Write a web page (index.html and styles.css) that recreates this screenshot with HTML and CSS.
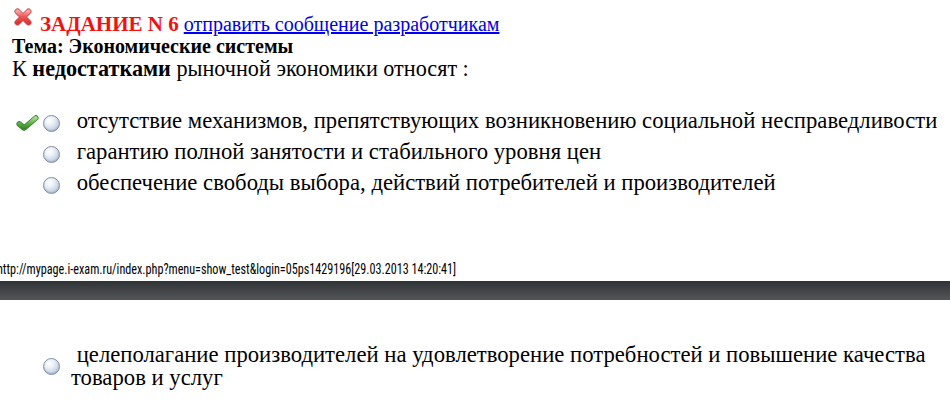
FILE: index.html
```html
<!DOCTYPE html>
<html>
<head>
<meta charset="utf-8">
<link rel="stylesheet" href="styles.css">
</head>
<body>
<div class="page">
  <div class="task-head">
    <svg class="x-icon" width="18" height="18" viewBox="0 0 18 18">
      <defs>
        <linearGradient id="xg" x1="0" y1="0" x2="0" y2="1">
          <stop offset="0" stop-color="#f9a0a0"/>
          <stop offset="0.45" stop-color="#ee5858"/>
          <stop offset="1" stop-color="#dc3636"/>
        </linearGradient>
      </defs>
      <g stroke-linecap="round" fill="none">
        <path d="M3.5 3.5 L14.5 14.5 M14.5 3.5 L3.5 14.5" stroke="#cf4a4a" stroke-width="6"/>
        <path d="M3.5 3.5 L14.5 14.5 M14.5 3.5 L3.5 14.5" stroke="url(#xg)" stroke-width="4.4"/>
      </g>
    </svg>
    <span class="task-text"><span class="task-num">ЗАДАНИЕ N 6</span> <a class="dev-link" href="#">отправить сообщение разработчикам</a></span>
  </div>
  <div class="topic">Тема: Экономические системы</div>
  <div class="question">К <b>недостатками</b> рыночной экономики относят :</div>

  <div class="options">
    <div class="opt">
      <span class="mark">
        <svg width="23" height="16" viewBox="0 0 23 16">
          <defs>
            <linearGradient id="cg" x1="0" y1="0" x2="0" y2="1">
              <stop offset="0" stop-color="#a6dc8c"/>
              <stop offset="0.5" stop-color="#63b24c"/>
              <stop offset="1" stop-color="#3b8a2c"/>
            </linearGradient>
          </defs>
          <g stroke-linecap="round" stroke-linejoin="round" fill="none">
            <path d="M3.2 9 L8.2 13 L19.8 3" stroke="#3d7f30" stroke-width="5.6"/>
            <path d="M3.2 9 L8.2 13 L19.8 3" stroke="url(#cg)" stroke-width="4"/>
          </g>
        </svg>
      </span>
      <span class="radio"></span>
      <span class="opt-text">&nbsp;отсутствие механизмов, препятствующих возникновению социальной несправедливости</span>
    </div>
    <div class="opt">
      <span class="mark"></span>
      <span class="radio"></span>
      <span class="opt-text">&nbsp;гарантию полной занятости и стабильного уровня цен</span>
    </div>
    <div class="opt">
      <span class="mark"></span>
      <span class="radio"></span>
      <span class="opt-text">&nbsp;обеспечение свободы выбора, действий потребителей и производителей</span>
    </div>
  </div>

  <div class="url"><span class="url-text">http://mypage.i-exam.ru/index.php?menu=show_test&amp;login=05ps1429196[29.03.2013 14:20:41]</span></div>
  <div class="bar"></div>

  <div class="options options-cont">
    <div class="opt opt-wrap">
      <span class="mark"></span>
      <span class="radio"></span>
      <span class="opt-text">&nbsp;целеполагание производителей на удовлетворение потребностей и повышение качества товаров и услуг</span>
    </div>
  </div>
</div>
</body>
</html>
```

FILE: styles.css
```css
html, body {
  margin: 0;
  padding: 0;
  background: #fff;
}
.page {
  width: 950px;
  height: 404px;
  overflow: hidden;
  font-family: "Liberation Serif", serif;
  font-size: 20px;
  color: #000;
}
.task-head {
  display: flex;
  align-items: flex-start;
  padding: 8px 0 0 14px;
  gap: 8px;
}
.x-icon {
  display: block;
  flex: none;
}
.task-text {
  margin-top: 5px;
  line-height: 22px;
  white-space: nowrap;
}
.task-num {
  color: #f21212;
  font-weight: bold;
  font-size: 21px;
}
.dev-link {
  color: #0000ee;
  text-decoration: underline;
}
.topic {
  padding-left: 12px;
  font-weight: bold;
  line-height: 22px;
}
.question {
  padding-left: 12px;
  font-size: 22.2px;
  line-height: 23px;
}
.options {
  display: flex;
  flex-direction: column;
  padding-top: 25px;
  font-size: 22.7px;
}
.opt {
  display: flex;
  align-items: flex-start;
  padding-left: 16px;
  height: 31px;
  line-height: 31px;
}
.mark {
  width: 23px;
  height: 16px;
  margin-top: 10px;
  margin-right: 4px;
  flex: none;
}
.mark svg {
  display: block;
}
.radio {
  width: 17px;
  height: 17px;
  margin-top: 10px;
  border-radius: 50%;
  border: 1px solid #7f8ea3;
  background: radial-gradient(circle at 36% 30%, #ffffff 0%, #eef3f9 28%, #c3d0e2 70%, #9fb0c7 100%);
  box-shadow: inset 0 -1px 1px rgba(90, 105, 130, 0.25);
  box-sizing: border-box;
  flex: none;
  margin-right: 11px;
}
.opt-text {
  white-space: nowrap;
}
.url {
  margin-top: 63px;
  margin-left: -3px;
  height: 16px;
  font-family: "Roboto Condensed", "Liberation Sans Narrow", sans-serif;
  font-size: 14px;
  line-height: 16px;
  color: #000;
  white-space: nowrap;
}
.url-text {
  display: inline-block;
  transform: scaleX(0.868);
  transform-origin: left center;
}
.bar {
  height: 19px;
  margin-top: 4px;
  background: linear-gradient(#2f3234, #44474a 55%, #525558);
}
.options-cont {
  padding-top: 43px;
}
.opt-wrap {
  height: auto;
  align-items: center;
  line-height: 23px;
}
.opt-wrap .mark,
.opt-wrap .radio {
  margin-top: 0;
}
.opt-wrap .opt-text {
  white-space: normal;
  padding-right: 10px;
}
```
